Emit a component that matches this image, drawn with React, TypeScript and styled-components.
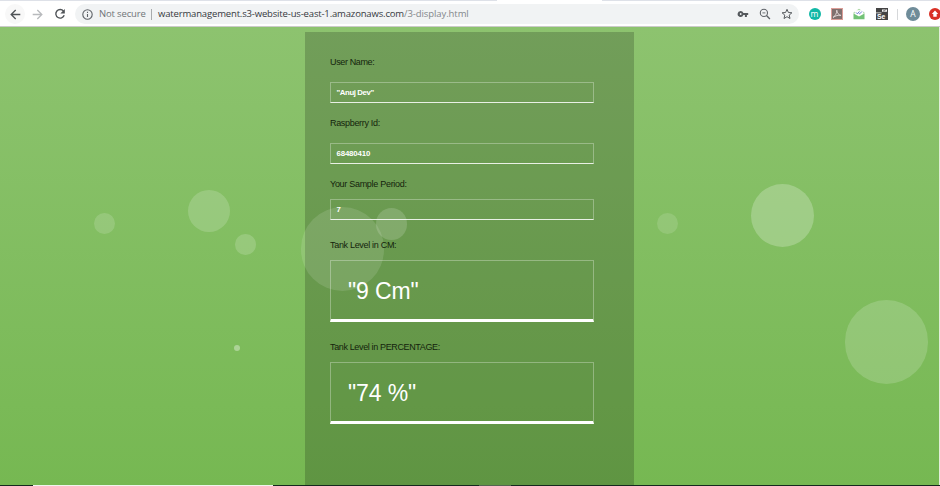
import React from "react";
import styled, { createGlobalStyle } from "styled-components";

const GlobalStyle = createGlobalStyle`
  * { box-sizing: border-box; }
  html, body { margin: 0; padding: 0; overflow: hidden; }
`;

const Window = styled.div`
  width: 940px;
  height: 486px;
  display: flex;
  flex-direction: column;
  background: #fff;
  overflow: hidden;
  font-family: "Liberation Sans", Arial, sans-serif;
`;

const TabStrip = styled.div`
  height: 1px;
  flex: none;
  display: flex;
  justify-content: space-between;
`;

const TabEdge = styled.div<{ $width: number }>`
  width: ${(p) => p.$width}px;
  background: #dee1e8;
`;

const Toolbar = styled.header`
  height: 26px;
  flex: none;
  display: flex;
  align-items: center;
  padding: 1px 0 0 5px;
  border-bottom: 1px solid #cbcbc9;
  overflow: hidden;
`;

const NavButton = styled.span<{ $active?: boolean; $width: number }>`
  width: ${(p) => p.$width}px;
  height: 20px;
  flex: none;
  display: flex;
  align-items: center;
  justify-content: center;
  border-radius: 10px;
  background: ${(p) => (p.$active ? "#f8f8f8" : "transparent")};
`;

const AddressBar = styled.div`
  width: 724px;
  height: 20px;
  flex: none;
  display: flex;
  align-items: center;
  margin-left: 5px;
  padding: 0 6px 0 7px;
  border-radius: 10px;
  background: #f1f3f4;
`;

const UrlText = styled.span<{ $color: string; $width: number; $spacing: number }>`
  width: ${(p) => p.$width}px;
  flex: none;
  color: ${(p) => p.$color};
  font: 9.5px/14px "Open Sans", "Noto Sans", sans-serif;
  letter-spacing: ${(p) => p.$spacing}px;
  white-space: nowrap;
`;

const Divider = styled.span<{ $color: string; $gap: string }>`
  width: 1px;
  height: 11px;
  flex: none;
  margin: ${(p) => p.$gap};
  background: ${(p) => p.$color};
`;

const BarIcons = styled.span`
  display: flex;
  align-items: center;
  gap: 10px;
  margin-left: auto;
`;

const Extensions = styled.div`
  display: flex;
  align-items: center;
  margin-left: 9.5px;
`;

const Badge = styled.span<{ $size: number; $bg: string; $gap?: number }>`
  width: ${(p) => p.$size}px;
  height: ${(p) => p.$size}px;
  flex: none;
  display: flex;
  align-items: center;
  justify-content: center;
  margin-right: ${(p) => p.$gap ?? 0}px;
  border-radius: 50%;
  background: ${(p) => p.$bg};
  color: #fff;
  font: 8.5px/10px "Open Sans", sans-serif;
`;

const ExtIcon = styled.svg<{ $gap: number }>`
  flex: none;
  margin-right: ${(p) => p.$gap}px;
`;

const Viewport = styled.main`
  position: relative;
  flex: 1;
  display: flex;
  justify-content: center;
  padding: 5px 1px 0 0;
  border-right: 1px solid #e3eedb;
  background: linear-gradient(#8dc36f, #76b852);
  overflow: hidden;
`;

const Form = styled.form`
  width: 329px;
  display: flex;
  flex-direction: column;
  padding: 22px 40px 0 25px;
  background: rgba(0, 0, 0, 0.19);
`;

const Label = styled.label<{ $gap: number; $spacing: number; $line: number }>`
  position: relative;
  z-index: 1;
  height: 14px;
  margin-bottom: ${(p) => p.$gap}px;
  padding-left: 0.5px;
  color: #14240c;
  font-size: 9px;
  line-height: ${(p) => p.$line}px;
  letter-spacing: ${(p) => p.$spacing}px;
  white-space: nowrap;
`;

const Field = styled.div<{ $after: number; $spacing: number }>`
  height: 21px;
  flex: none;
  margin-bottom: ${(p) => p.$after}px;
  padding-left: 6px;
  border: 1px solid rgba(255, 255, 255, 0.3);
  border-bottom-color: rgba(255, 255, 255, 0.85);
  color: #fff;
  font-size: 7.8px;
  font-weight: bold;
  line-height: 20px;
  letter-spacing: ${(p) => p.$spacing}px;
`;

const Reading = styled.div<{ $after: number }>`
  height: 62px;
  flex: none;
  margin-bottom: ${(p) => p.$after}px;
  padding-left: 17.5px;
  border: 1px solid rgba(255, 255, 255, 0.3);
  border-bottom: 3px solid #fff;
  color: #fff;
  font-size: 23px;
  line-height: 60px;
  letter-spacing: -0.1px;
`;

const Bubble = styled.i<{ $x: number; $y: number; $size: number; $alpha: number }>`
  position: absolute;
  left: ${(p) => p.$x}px;
  top: ${(p) => p.$y}px;
  width: ${(p) => p.$size}px;
  height: ${(p) => p.$size}px;
  border-radius: 50%;
  background: rgba(255, 255, 255, ${(p) => p.$alpha});
`;

const BottomEdge = styled.footer`
  height: 1px;
  flex: none;
  display: flex;
  background: #14291d;
`;

const EdgeSegment = styled.span<{ $start: number; $width: number; $bg: string }>`
  width: ${(p) => p.$width}px;
  margin-left: ${(p) => p.$start}px;
  background: ${(p) => p.$bg};
`;

const bubbles = [
  { x: 94, y: 186, size: 21, alpha: 0.15 },
  { x: 188, y: 163, size: 42, alpha: 0.17 },
  { x: 235, y: 207, size: 20.5, alpha: 0.17 },
  { x: 234, y: 318, size: 6, alpha: 0.36 },
  { x: 300.5, y: 180, size: 83.5, alpha: 0.12 },
  { x: 375.5, y: 181, size: 31.5, alpha: 0.16 },
  { x: 657, y: 186, size: 21, alpha: 0.13 },
  { x: 750.5, y: 157, size: 63, alpha: 0.23 },
  { x: 844.5, y: 273, size: 83.5, alpha: 0.17 },
];

const fields = [
  { label: "User Name:", value: '"Anuj Dev"', gap: 14, after: 12, spacing: -0.36, valueSpacing: -0.4, line: 16 },
  { label: "Raspberry Id:", value: "68480410", gap: 14, after: 13, spacing: -0.32, valueSpacing: -0.13, line: 16 },
  { label: "Your Sample Period:", value: "7", gap: 8, after: 18, spacing: -0.29, valueSpacing: 0, line: 14 },
];

const readings = [
  { label: "Tank Level in CM:", value: '"9 Cm"', gap: 8, after: 18, spacing: -0.31, line: 14 },
  { label: "Tank Level in PERCENTAGE:", value: '"74 %"', gap: 8, after: 0, spacing: -0.36, line: 14 },
];

function ArrowIcon({ color, flip }: { color: string; flip?: boolean }) {
  return (
    <svg width="11" height="11" viewBox="0 0 11 11" fill="none" stroke={color} strokeWidth="1.35">
      <path d={flip ? "M.7 5.5h9M5.3 1l4.5 4.5L5.3 10" : "M10.3 5.5h-9M5.7 1 1.2 5.5 5.7 10"} />
    </svg>
  );
}

export default function App() {
  return (
    <>
      <GlobalStyle />
      <Window>
        <TabStrip>
          <TabEdge $width={497} />
          <TabEdge $width={338} />
        </TabStrip>
        <Toolbar>
          <NavButton $width={20} $active><ArrowIcon color="#4f5357" /></NavButton>
          <NavButton $width={25}><ArrowIcon color="#b8babd" flip /></NavButton>
          <NavButton $width={20}>
            <svg width="12" height="12" viewBox="0 0 12 12">
              <path d="M9.5 3.1A4.3 4.3 0 1 0 10.2 7.2" fill="none" stroke="#4f5357" strokeWidth="1.4" />
              <path d="M10.8 1v4.5H6.3z" fill="#4f5357" />
            </svg>
          </NavButton>
          <AddressBar>
            <svg width="11" height="11" viewBox="0 0 11 11" fill="none" stroke="#5f6368" strokeWidth="1.1">
              <circle cx="5.5" cy="5.5" r="4.7" />
              <path d="M5.5 4.9v3.2M5.5 2.8V4" />
            </svg>
            <Divider $color="transparent" $gap="0 3px 0 2px" />
            <UrlText $color="#707478" $width={49} $spacing={-0.15}>Not secure</UrlText>
            <Divider $color="#a8abad" $gap="0 6px 0 3px" />
            <UrlText $color="#35393d" $width={246} $spacing={-0.16}>watermanagement.s3-website-us-east-1.amazonaws.com</UrlText>
            <UrlText $color="#83878b" $width={70} $spacing={-0.08}>/3-display.html</UrlText>
            <BarIcons>
              <svg width="12" height="12" viewBox="0 0 12 12">
                <path fill="#55595d" fillRule="evenodd" d="M3.7 3a3 3 0 1 0 2.7 4.1h1.5v1.8h2V7.1h1.3V4.9H6.4A3 3 0 0 0 3.7 3m0 2.1a.9.9 0 1 1 0 1.8.9.9 0 0 1 0-1.8" />
              </svg>
              <svg width="12" height="12" viewBox="0 0 12 12" fill="none" stroke="#5f6368">
                <circle cx="4.9" cy="4.9" r="3.6" strokeWidth="1.1" />
                <path d="m7.5 7.5 3.4 3.4" strokeWidth="1.4" />
                <path d="M3.4 4.9h3" strokeWidth=".9" />
              </svg>
              <svg width="12" height="12" viewBox="0 0 12 12" fill="none" stroke="#55595d" strokeWidth="1">
                <path d="m6 1.3 1.4 3.2 3.5.3L8.2 7.1l.8 3.4-3-1.8-3 1.8.8-3.4-2.7-2.3 3.5-.3z" />
              </svg>
            </BarIcons>
          </AddressBar>
          <Extensions>
            <Badge $size={12} $bg="#11b8a6" $gap={10.5}>m</Badge>
            <ExtIcon $gap={10} width="12" height="12" viewBox="0 0 12 12">
              <path fill="#dc9d97" d="M0 0h12v12H0z" />
              <path fill="#80706e" d="M1 1h10v10H1z" />
              <path d="M2 9.4c2-1.2 3.8-3.8 3.8-7.2.1 2.7 1.8 4.7 4.1 5.2-2.8-.6-5.2.4-7.9 2" fill="none" stroke="#eadedc" strokeWidth=".9" />
            </ExtIcon>
            <ExtIcon $gap={10.5} width="12" height="12" viewBox="0 0 12 12">
              <path fill="#a9d7a1" d="M.5 4.6 6 .7l5.5 3.9v1H.5z" />
              <path fill="#fff" d="M1.8 2.2h8.4v5H1.8z" />
              <path d="m3 4.4 1.3 1.4 2.2-2.4M5.7 5.1l.9.8 2.4-2.5" fill="none" stroke="#6470cf" strokeWidth=".9" />
              <path fill="#72c276" d="M.5 5.6 6 8.6l5.5-3v5.7H.5z" />
            </ExtIcon>
            <ExtIcon $gap={9.5} width="12" height="12" viewBox="0 0 12 12">
              <path fill="#444" d="M0 0h12v12H0z" />
              <path fill="#f2f2f2" d="M6 1.4h5v2.4H6zM0 4.4h5.5v.9H0z" />
              <path d="m7 2.4.9.8 2-1.6" fill="none" stroke="#444" strokeWidth=".7" />
              <text x="1" y="11" fill="#fff" fontFamily="Liberation Sans" fontWeight="bold" fontSize="6.8">Se</text>
            </ExtIcon>
            <Divider $color="#d6d8da" $gap="0 8px 0 0" />
            <Badge $size={14} $bg="#6f8c99" $gap={9}>A</Badge>
            <Badge $size={12} $bg="#d93025">
              <svg width="8" height="8" viewBox="0 0 8 8">
                <path fill="#fff" d="m4 .6 3.2 3.5H5.7v2.7H2.3V4.1H.8z" />
              </svg>
            </Badge>
          </Extensions>
        </Toolbar>
        <Viewport>
          <Form>
            {fields.map((f) => (
              <React.Fragment key={f.label}>
                <Label $gap={f.gap} $spacing={f.spacing} $line={f.line}>{f.label}</Label>
                <Field $after={f.after} $spacing={f.valueSpacing}>{f.value}</Field>
              </React.Fragment>
            ))}
            {readings.map((r) => (
              <React.Fragment key={r.label}>
                <Label $gap={r.gap} $spacing={r.spacing} $line={r.line}>{r.label}</Label>
                <Reading $after={r.after}>{r.value}</Reading>
              </React.Fragment>
            ))}
          </Form>
          {bubbles.map((b) => (
            <Bubble key={`${b.x}-${b.y}`} $x={b.x} $y={b.y} $size={b.size} $alpha={b.alpha} />
          ))}
        </Viewport>
        <BottomEdge>
          <EdgeSegment $start={33} $width={240} $bg="#f0f5ed" />
          <EdgeSegment $start={206} $width={32} $bg="#53664f" />
        </BottomEdge>
      </Window>
    </>
  );
}
